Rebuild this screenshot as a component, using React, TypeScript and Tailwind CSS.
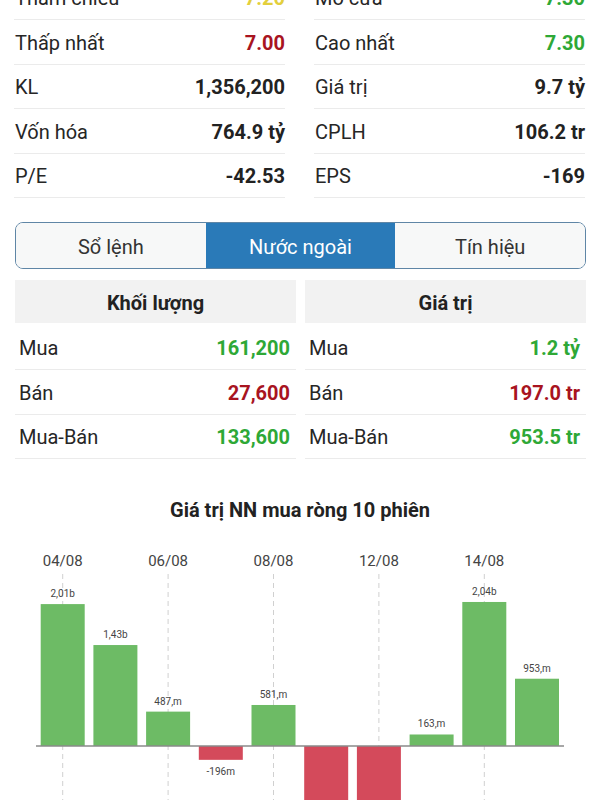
import React from "react";

const font = { fontFamily: "Roboto, 'Noto Sans', sans-serif" };

type Row = { label: string; value: string; color: string };

const leftInfo: Row[] = [
  { label: "Tham chiếu", value: "7.20", color: "text-[#e3cf3c]" },
  { label: "Thấp nhất", value: "7.00", color: "text-[#a8141f]" },
  { label: "KL", value: "1,356,200", color: "text-[#222222]" },
  { label: "Vốn hóa", value: "764.9 tỷ", color: "text-[#222222]" },
  { label: "P/E", value: "-42.53", color: "text-[#222222]" },
];
const rightInfo: Row[] = [
  { label: "Mở cửa", value: "7.30", color: "text-[#2ea836]" },
  { label: "Cao nhất", value: "7.30", color: "text-[#2ea836]" },
  { label: "Giá trị", value: "9.7 tỷ", color: "text-[#222222]" },
  { label: "CPLH", value: "106.2 tr", color: "text-[#222222]" },
  { label: "EPS", value: "-169", color: "text-[#222222]" },
];

function InfoCol({ rows }: { rows: Row[] }) {
  return (
    <div className="flex flex-col">
      {rows.map((r) => (
        <div
          key={r.label}
          className="h-[44.5px] flex items-center justify-between border-b border-[#ebebeb] pl-[1px] pt-[2px]"
        >
          <span className="text-[20px] text-[#262626]">{r.label}</span>
          <span className={`text-[20px] font-bold ${r.color}`}>{r.value}</span>
        </div>
      ))}
    </div>
  );
}

function NNCol({ title, rows }: { title: string; rows: Row[] }) {
  return (
    <div className="flex flex-col">
      <div className="h-[43px] bg-[#f2f2f2] flex items-center justify-center pt-[3px] text-[20px] font-bold text-[#222222]">
        {title}
      </div>
      <div className="mt-[2.5px]">
        {rows.map((r) => (
          <div
            key={r.label}
            className="h-[44.5px] flex items-center justify-between border-b border-[#ebebeb] pl-[4px] pr-[6px] pt-[2px]"
          >
            <span className="text-[20px] text-[#262626]">{r.label}</span>
            <span className={`text-[20px] font-bold ${r.color}`}>{r.value}</span>
          </div>
        ))}
      </div>
    </div>
  );
}

const bars = [
  { v: 2.01, label: "2,01b" },
  { v: 1.43, label: "1,43b" },
  { v: 0.487, label: "487,m" },
  { v: -0.196, label: "-196m" },
  { v: 0.581, label: "581,m" },
  { v: -1.25, label: "-1,25b" },
  { v: -1.2, label: "-1,2b" },
  { v: 0.163, label: "163,m" },
  { v: 2.04, label: "2,04b" },
  { v: 0.953, label: "953,m" },
];
const dates = ["04/08", "06/08", "08/08", "12/08", "14/08"];

function Chart() {
  const base = 746;
  const scale = 70.6;
  const x0 = 40.7;
  const pitch = 52.7;
  const w = 44;
  return (
    <svg width={600} height={277} viewBox="0 523 600 277" className="block">
      {dates.map((d, k) => {
        const cx = x0 + k * 2 * pitch + w / 2;
        return (
          <g key={d}>
            <text x={cx} y={565.5} textAnchor="middle" fontSize={15} fill="#444" style={font}>
              {d}
            </text>
            <line x1={cx} x2={cx} y1={574} y2={800} stroke="#d0d0d0" strokeWidth={1} strokeDasharray="5 4" />
          </g>
        );
      })}
      {bars.map((b, i) => {
        const x = x0 + i * pitch;
        const h = Math.abs(b.v) * scale;
        const pos = b.v >= 0;
        const y = pos ? base - h : base;
        return (
          <g key={i}>
            <rect x={x} y={y} width={w} height={h} fill={pos ? "#6dbb65" : "#d44a5b"} />
            <text
              x={x + w / 2}
              y={pos ? y - 7 : base + h + 15}
              textAnchor="middle"
              fontSize={10}
              fill="#444"
              style={font}
            >
              {b.label}
            </text>
          </g>
        );
      })}
      <line x1={36} x2={564} y1={base} y2={base} stroke="#8a8a8a" strokeWidth={1.5} />
    </svg>
  );
}

export default function App() {
  return (
    <div className="w-[600px] h-[800px] overflow-hidden bg-white" style={font}>
      <div className="-mt-[24.5px] grid grid-cols-2 gap-x-[29px] pl-[14px] pr-[15px]">
        <InfoCol rows={leftInfo} />
        <InfoCol rows={rightInfo} />
      </div>

      <div className="mt-[24px] ml-[15px] mr-[14px] h-[47px] flex rounded-lg border-[1.5px] border-[#5f86a6] overflow-hidden">
        <div className="flex-1 bg-[#f7f8f8] flex items-center justify-center pt-[3px] text-[20px] text-[#333333]">Sổ lệnh</div>
        <div className="flex-1 bg-[#2a7ab8] flex items-center justify-center pt-[3px] text-[20px] text-white">Nước ngoài</div>
        <div className="flex-1 bg-[#f7f8f8] flex items-center justify-center pt-[3px] text-[20px] text-[#333333]">Tín hiệu</div>
      </div>

      <div className="mt-[11px] grid grid-cols-2 gap-x-[9px] pl-[15px] pr-[14px]">
        <NNCol
          title="Khối lượng"
          rows={[
            { label: "Mua", value: "161,200", color: "text-[#2ea836]" },
            { label: "Bán", value: "27,600", color: "text-[#a8141f]" },
            { label: "Mua-Bán", value: "133,600", color: "text-[#2ea836]" },
          ]}
        />
        <NNCol
          title="Giá trị"
          rows={[
            { label: "Mua", value: "1.2 tỷ", color: "text-[#2ea836]" },
            { label: "Bán", value: "197.0 tr", color: "text-[#a8141f]" },
            { label: "Mua-Bán", value: "953.5 tr", color: "text-[#2ea836]" },
          ]}
        />
      </div>

      <div className="mt-[39px] h-[25px] leading-[25px] text-center text-[20px] font-bold text-[#222222]">
        Giá trị NN mua ròng 10 phiên
      </div>
      <Chart />
    </div>
  );
}
